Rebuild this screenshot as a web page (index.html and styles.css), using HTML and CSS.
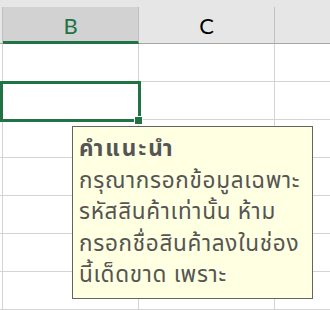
FILE: index.html
```html
<!DOCTYPE html>
<html lang="th">
<head>
  <meta charset="UTF-8" />
  <title>Sheet</title>
  <link rel="stylesheet" href="styles.css">
</head>
<body>

  <div class="sheet">
    <div class="top-strip"></div>

    <div class="row head">
      <div class="cell stub"></div>
      <div class="cell col-b active">B</div>
      <div class="cell col-c">C</div>
      <div class="cell col-d"></div>
    </div>

    <div class="row">
      <div class="cell stub"></div>
      <div class="cell col-b"></div>
      <div class="cell col-c"></div>
      <div class="cell col-d"></div>
    </div>
    <div class="row">
      <div class="cell stub"></div>
      <div class="cell col-b"></div>
      <div class="cell col-c"></div>
      <div class="cell col-d"></div>
    </div>
    <div class="row">
      <div class="cell stub"></div>
      <div class="cell col-b"></div>
      <div class="cell col-c"></div>
      <div class="cell col-d"></div>
    </div>
    <div class="row">
      <div class="cell stub"></div>
      <div class="cell col-b"></div>
      <div class="cell col-c"></div>
      <div class="cell col-d"></div>
    </div>
    <div class="row">
      <div class="cell stub"></div>
      <div class="cell col-b"></div>
      <div class="cell col-c"></div>
      <div class="cell col-d"></div>
    </div>
    <div class="row">
      <div class="cell stub"></div>
      <div class="cell col-b"></div>
      <div class="cell col-c"></div>
      <div class="cell col-d"></div>
    </div>
    <div class="row">
      <div class="cell stub"></div>
      <div class="cell col-b"></div>
      <div class="cell col-c"></div>
      <div class="cell col-d"></div>
    </div>

    <!-- celda seleccionada -->
    <div class="selection"></div>
    <div class="fill-handle"></div>

    <!-- mensaje de entrada -->
    <div class="tip">
      <div class="tip-title">คำแนะนำ</div>
      <div class="tip-text">กรุณากรอกข้อมูลเฉพาะ<br>รหัสสินค้าเท่านั้น ห้าม<br>กรอกชื่อสินค้าลงในช่อง<br>นี้เด็ดขาด เพราะ</div>
    </div>
  </div>

</body>
</html>
```

FILE: styles.css
```css
* { box-sizing: border-box; margin: 0; padding: 0; }

body {
  background: white;
  font-family: Lato, "Liberation Sans", sans-serif;
  overflow: hidden;
}

.sheet {
  position: relative;
  width: 330px;
  height: 310px;
  overflow: hidden;
}

.top-strip {
  height: 7px;
  background-color: #e6e6e6;
}

.row {
  display: flex;
  height: 38px;
}

.cell {
  border-right: 1px solid #d4d4d4;
  border-bottom: 1px solid #d4d4d4;
}

.stub { width: 3px; }
.col-b { width: 136px; }
.col-c { width: 136px; }
.col-d { flex-grow: 1; border-right: none; }

/* Cabecera de columnas */
.head {
  height: 37px;
  background-color: #e6e6e6;
}

.head .cell {
  display: flex;
  align-items: center;
  justify-content: center;
  border-right-color: #c0c0c0;
  border-bottom: 1px solid #a6a6a6;
  font-size: 22px;
  color: #000;
}

.head .col-d { border-right: none; }

.head .active {
  background-color: #d2d2d2;
  color: #217346;
  border-bottom: 3px solid #217346;
  padding-top: 2px;
}

.selection {
  position: absolute;
  left: 0;
  top: 81px;
  width: 141px;
  height: 41px;
  border: 3px solid #217346;
}

.fill-handle {
  position: absolute;
  left: 134px;
  top: 116px;
  width: 9px;
  height: 9px;
  background-color: #217346;
  border: 1px solid white;
}

.tip {
  position: absolute;
  left: 72px;
  top: 126px;
  width: 241px;
  height: 173px;
  background-color: #ffffe1;
  border: 1px solid #646464;
  padding: 7px 0 0 6px;
  font-family: "Noto Sans Thai", Tahoma, "Noto Sans", sans-serif;
  color: #555555;
  font-size: 22.5px;
  line-height: 31.5px;
  letter-spacing: 0.7px;
  white-space: nowrap;
}

.tip-title {
  font-weight: bold;
  letter-spacing: 2px;
}
```
